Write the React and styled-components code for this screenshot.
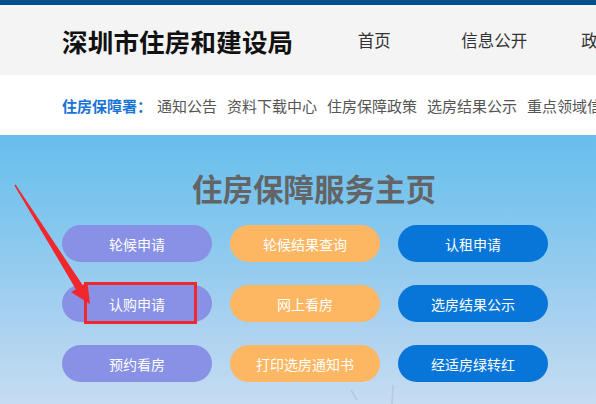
import styled, { createGlobalStyle } from "styled-components";

const Global = createGlobalStyle`
  html, body { margin: 0; padding: 0; }
  body {
    width: 596px;
    height: 404px;
    overflow: hidden;
    font-family: "Noto Sans CJK SC", "Noto Sans", sans-serif;
  }
`;

const links = ["通知公告", "资料下载中心", "住房保障政策", "选房结果公示", "重点领域信息公开"];

const buttons = [
  { label: "轮候申请", tone: "purple" },
  { label: "轮候结果查询", tone: "orange" },
  { label: "认租申请", tone: "blue" },
  { label: "认购申请", tone: "purple" },
  { label: "网上看房", tone: "orange" },
  { label: "选房结果公示", tone: "blue" },
  { label: "预约看房", tone: "purple" },
  { label: "打印选房通知书", tone: "orange" },
  { label: "经适房绿转红", tone: "blue" },
];

const tones = {
  purple: "#8891e6",
  orange: "#fdb662",
  blue: "#0876d8",
};

const App = () => {
  return (
    <Page>
      <Global />
      <TopStripe />
      <Header>
        <SiteName>深圳市住房和建设局</SiteName>
        <Nav>
          <NavItem>首页</NavItem>
          <NavItem>信息公开</NavItem>
          <NavItem>政务服务</NavItem>
        </Nav>
      </Header>
      <SubBar>
        <SubLabel>住房保障署：</SubLabel>
        {links.map((l) => (
          <SubLink key={l}>{l}</SubLink>
        ))}
      </SubBar>
      <Hero>
        <HeroTitle>住房保障服务主页</HeroTitle>
        <ButtonGrid>
          {buttons.map((b) => (
            <PillButton key={b.label} tone={b.tone}>
              {b.label}
            </PillButton>
          ))}
        </ButtonGrid>
        <Turbine viewBox="0 0 60 20">
          <path d="M6 6 L12 16 M48 1 L47 20" stroke="#b9c8dc" strokeWidth="1.6" fill="none" />
        </Turbine>
        <Highlight />
        <Arrow viewBox="0 0 120 130">
          {/* annotation arrow, thin tail widening to the head */}
          <path
            d="M15.6 4.6 L82.6 105 L87.4 102 L90 124 L71.2 112.2 L75.9 109.2 L14.4 5.4 Z"
            fill="#f0282d"
          />
        </Arrow>
      </Hero>
    </Page>
  );
};

const Page = styled.div`
  width: 596px;
  height: 404px;
  overflow: hidden;
  display: flex;
  flex-direction: column;
`;

const TopStripe = styled.div`
  height: 5px;
  background: #02518f;
`;

const Header = styled.div`
  height: 70px;
  background: #f4f4f4;
  display: flex;
  align-items: center;
  padding-left: 62px;
  white-space: nowrap;
`;

const SiteName = styled.h1`
  margin: 0;
  font-size: 25.5px;
  font-weight: 700;
  color: #111;
  letter-spacing: 0.2px;
`;

const Nav = styled.nav`
  display: flex;
  margin-left: 21px;
`;

const NavItem = styled.span`
  width: 120px;
  text-align: center;
  font-size: 16.5px;
  color: #333;
`;

const SubBar = styled.div`
  height: 60px;
  background: #fff;
  display: flex;
  align-items: center;
  padding-left: 62px;
  white-space: nowrap;
  font-size: 15px;
  padding-top: 1px;
  box-sizing: border-box;
`;

const SubLabel = styled.span`
  color: #1774d6;
  font-weight: 700;
  margin-right: 5px;
`;

const SubLink = styled.span`
  color: #555;
  margin-right: 10px;
`;

const Hero = styled.div`
  position: relative;
  flex: 1;
  background: linear-gradient(180deg, #66bfec 0%, #86c7ee 35%, #a5d0f0 65%, #c6dcf1 100%);
  display: flex;
  flex-direction: column;
  padding-left: 62px;
`;

const HeroTitle = styled.h2`
  margin: 33px 0 0;
  width: 486px;
  padding-left: 18px;
  box-sizing: border-box;
  text-align: center;
  font-size: 30.5px;
  font-weight: 700;
  color: #626466;
  line-height: 40px;
`;

const ButtonGrid = styled.div`
  display: grid;
  grid-template-columns: repeat(3, 150px);
  column-gap: 18px;
  row-gap: 23px;
  margin-top: 17px;
`;

const PillButton = styled.div`
  height: 37px;
  border-radius: 19px;
  background: ${(p) => tones[p.tone]};
  color: #fff;
  font-size: 14px;
  display: flex;
  align-items: center;
  justify-content: center;
`;

const Highlight = styled.div`
  position: absolute;
  left: 84px;
  top: 147px;
  width: 107px;
  height: 36px;
  border: 3px solid #f0282d;
`;

const Arrow = styled.svg`
  position: absolute;
  left: 0;
  top: 45px;
  width: 120px;
  height: 130px;
`;

const Turbine = styled.svg`
  position: absolute;
  left: 345px;
  bottom: 0;
  width: 60px;
  height: 20px;
`;

export default App;
